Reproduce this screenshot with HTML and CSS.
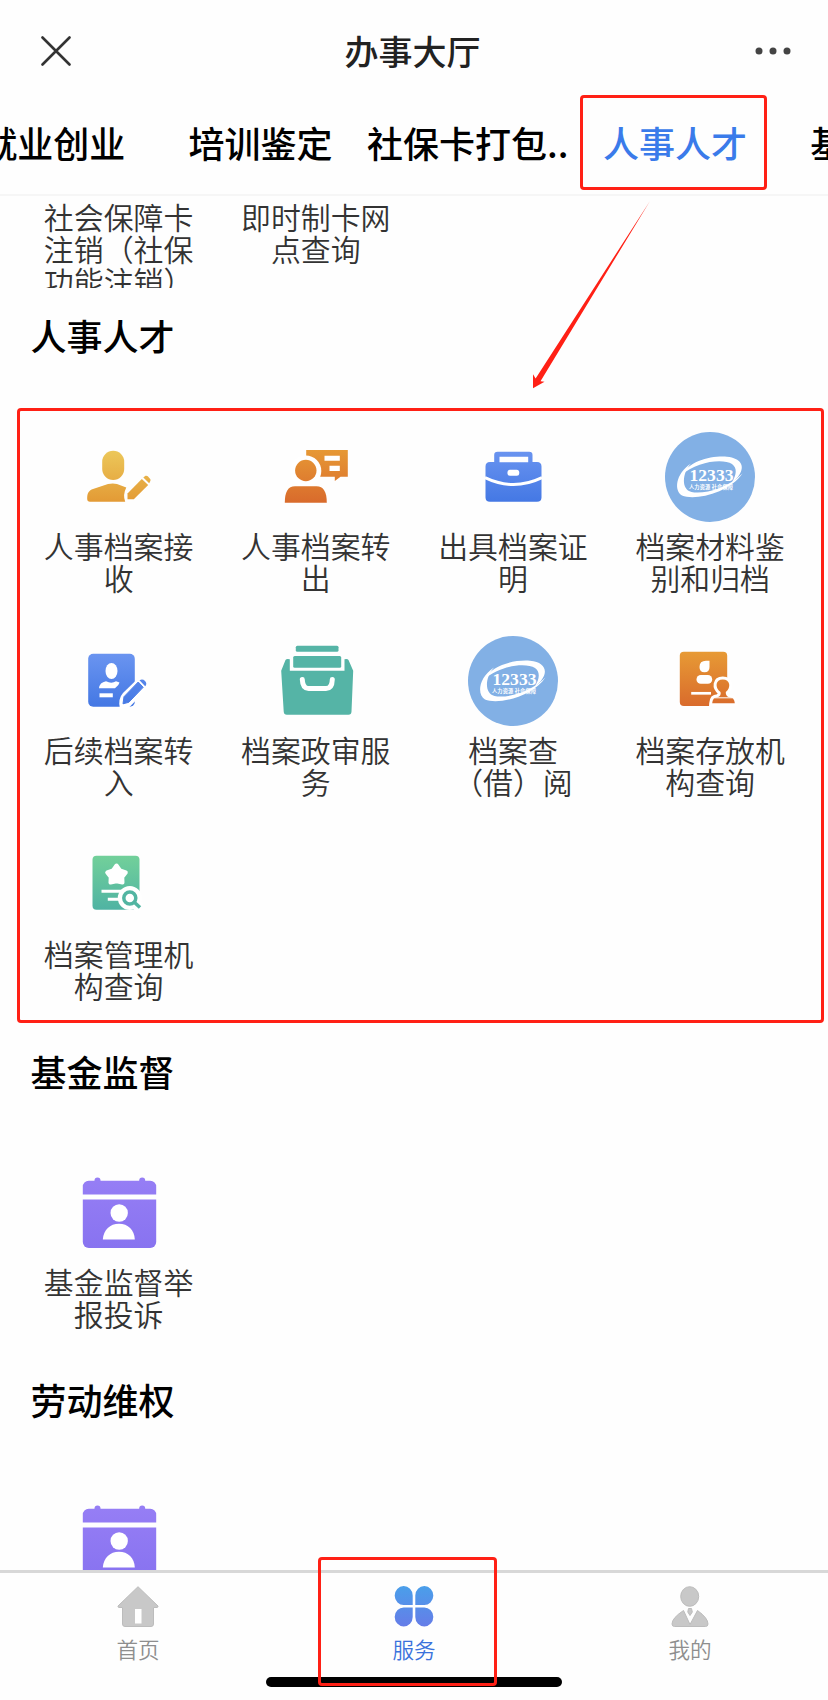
FILE: index.html
```html
<!DOCTYPE html>
<html lang="zh-CN">
<head>
    <meta charset="UTF-8">
    <meta name="viewport" content="width=device-width, initial-scale=1.0">
    <title>办事大厅</title>
    <link rel="stylesheet" href="styles.css">
</head>
<body>
    <!-- Shared gradients and icons -->
    <svg class="defs" width="0" height="0">
        <defs>
            <linearGradient id="gold" gradientUnits="userSpaceOnUse" x1="0" y1="18" x2="0" y2="70"><stop offset="0" stop-color="#ecc85a"/><stop offset="1" stop-color="#e39a35"/></linearGradient>
            <linearGradient id="orange" gradientUnits="userSpaceOnUse" x1="0" y1="16" x2="0" y2="70"><stop offset="0" stop-color="#e79a35"/><stop offset="1" stop-color="#d96b2c"/></linearGradient>
            <linearGradient id="blue" gradientUnits="userSpaceOnUse" x1="0" y1="18" x2="0" y2="70"><stop offset="0" stop-color="#6a94f0"/><stop offset="1" stop-color="#4478e4"/></linearGradient>
            <linearGradient id="green" gradientUnits="userSpaceOnUse" x1="0" y1="16" x2="0" y2="70"><stop offset="0" stop-color="#72d09a"/><stop offset="1" stop-color="#4fb3a3"/></linearGradient>
            <linearGradient id="purple" gradientUnits="userSpaceOnUse" x1="0" y1="10" x2="0" y2="80"><stop offset="0" stop-color="#967ef5"/><stop offset="1" stop-color="#8873f0"/></linearGradient>
            <linearGradient id="petal" gradientUnits="userSpaceOnUse" x1="0" y1="0" x2="0" y2="40"><stop offset="0" stop-color="#4a9fea"/><stop offset="1" stop-color="#657de8"/></linearGradient>
        </defs>
        <symbol id="logo" viewBox="0 0 90 90">
            <circle cx="45" cy="45" r="45" fill="#82b0e5"/>
            <path fill="#fff" d="M15.500 44C24 29 46 23.500 62 24.700C76 26 80 34 74.500 42.500C72.500 46 69.500 48.500 67 50C71.500 43 72.500 36 67 32C58 26.500 32 29 15.500 44Z"/>
            <path fill="#fff" d="M26 31.500C10 42 9 59 17 63.500C30 69 64 61 77.500 41.500C62 57 38 62.500 26.500 60C16 57.500 17 41 26 31.500Z"/>
        </symbol>
        <symbol id="calendar" viewBox="0 0 90 90">
            <g fill="url(#purple)">
                <circle cx="23.500" cy="12.500" r="3"/><circle cx="68.200" cy="12.500" r="3"/>
                <path d="M8.800 26.500V19a6 6 0 0 1 6-6.300H76.200a6 6 0 0 1 6 6.300V26.500Z"/>
                <path d="M8.800 31.500H82.200V74a6 6 0 0 1-6 6H14.800a6 6 0 0 1-6-6Z"/>
            </g>
            <circle cx="45.200" cy="45" r="8.700" fill="#fff"/>
            <path fill="#fff" d="M28.800 71.400C29.500 62 36 55.800 45 55.800S60.400 62 60.800 71.400Z"/>
        </symbol>
    </svg>

    <div class="page">
        <!-- Header -->
        <header class="header">
            <svg class="close" viewBox="0 0 30 30"><path d="M1.500 1.500L28.500 28.500M28.500 1.500L1.500 28.500"/></svg>
            <h1>办事大厅</h1>
            <svg class="more" viewBox="0 0 38 10"><circle cx="5" cy="5" r="3.500"/><circle cx="19" cy="5" r="3.500"/><circle cx="33" cy="5" r="3.500"/></svg>
        </header>

        <!-- Tabs -->
        <nav class="tabs">
            <a class="tab">就业创业</a>
            <a class="tab">培训鉴定</a>
            <a class="tab">社保卡打包..</a>
            <a class="tab active">人事人才</a>
            <a class="tab">基金监督</a>
        </nav>

        <!-- Service list -->
        <main class="content">
            <div class="grid cut">
                <div class="item"><p>社会保障卡注销（社保功能注销）</p></div>
                <div class="item"><p>即时制卡网点查询</p></div>
            </div>

            <h2>人事人才</h2>
            <div class="grid">
                <div class="item">
                    <svg viewBox="0 0 90 90" fill="url(#gold)">
                        <rect x="28.200" y="18.700" width="22" height="29.300" rx="11"/>
                        <path d="M13.200 67C13 61 15 58.500 19 57L34 52Q39 50.800 43 52L52.300 55.500Q48.500 63 51.200 69.700H16Q13.300 69.700 13.200 67Z"/>
                        <path d="M53.500 67.300V61.500L67.800 47L74.200 53L59.800 67.300Z"/>
                        <path d="M69.300 45.500L71.500 43.800Q72.800 43.300 73.800 44.300L76.200 47Q77 48 76.200 49.300L75.200 51.300Z"/>
                    </svg>
                    <p>人事档案接收</p>
                </div>
                <div class="item">
                    <svg viewBox="0 0 90 90" fill="url(#orange)">
                        <path d="M35.200 18H76.800V44.700H69.500L63.800 49V44.700H35.200Z"/>
                        <path fill="#fff" d="M53.500 23.700H68.800V28.700H53.500ZM58.500 33.700H68.800V39H58.500Z"/>
                        <circle cx="34.800" cy="39" r="15.500" fill="#fff"/>
                        <circle cx="34.800" cy="38.500" r="10.700"/>
                        <path d="M13.800 70.700C13.800 60 17 54.300 24 54.300H45.500C52.500 54.300 55.800 60 55.800 70.700Z"/>
                    </svg>
                    <p>人事档案转出</p>
                </div>
                <div class="item">
                    <svg viewBox="0 0 90 90" fill="url(#blue)">
                        <path fill-rule="evenodd" d="M26.200 30V23Q26.200 19.700 29.500 19.700H61.200Q64.500 19.700 64.500 23V30H69Q73.500 30 73.500 34.500V65.500Q73.500 69.700 69 69.700H22Q17.500 69.700 17.500 65.500V34.500Q17.500 30 22 30ZM31.500 24.700V30.300H60.200V24.700Z"/>
                        <rect x="39.500" y="37.700" width="11.700" height="6" rx="2.500" fill="#fff"/>
                        <path d="M17 45.700Q45.500 59.500 74 45.700" fill="none" stroke="#fff" stroke-width="3"/>
                    </svg>
                    <p>出具档案证明</p>
                </div>
                <div class="item">
                    <svg viewBox="0 0 90 90">
                        <use href="#logo"/>
                        <text class="logo-num" x="24.500" y="49.300" textLength="44">12333</text>
                        <text class="logo-text" x="24" y="56.500" textLength="44">人力资源 社会保障</text>
                    </svg>
                    <p>档案材料鉴别和归档</p>
                </div>

                <div class="item">
                    <svg viewBox="0 0 90 90" fill="url(#blue)">
                        <rect x="14.200" y="17.700" width="46.600" height="53" rx="5"/>
                        <ellipse cx="37.500" cy="35" rx="6" ry="8" fill="#fff"/>
                        <path fill="#fff" d="M25 52.300Q25.500 46.500 32 45.300Q37.500 48 42 45.300L45.500 46.500Q45 49.500 41 52.300Z"/>
                        <path d="M25.500 59.300H38.800" stroke="#fff" stroke-width="4"/>
                        <path d="M46 73Q43.500 63 49 57L66 40.500L76 50L55.500 71Z" fill="#fff"/>
                        <path d="M49 67.800L50 60.700L64.200 46L69.200 51.300L54.800 66.300Z" stroke="url(#blue)" stroke-linejoin="round"/>
                        <path d="M65.500 44.300Q68.500 42.500 71 45T71.200 50.300Z"/>
                    </svg>
                    <p>后续档案转入</p>
                </div>
                <div class="item">
                    <svg viewBox="0 0 90 90" fill="#55b4a6">
                        <rect x="24.800" y="9.700" width="42.700" height="6" rx="1.500"/>
                        <rect x="22.200" y="20" width="48" height="11.700" rx="1.500"/>
                        <path d="M10.200 34.700L14.500 24Q15.500 22.500 18.800 23.300V34.700H73.500V23.300Q76.500 22.500 77.500 24L82.200 34.700L80.500 75.500Q80.300 78.700 77.500 78.700H15.800Q13 78.700 12.700 75.500Z"/>
                        <path d="M31.300 43.500C31.500 49 33 52.500 37.500 52.500H55C59.500 52.500 61.200 49 61.300 43.500" fill="none" stroke="#fff" stroke-width="5" stroke-linecap="round"/>
                    </svg>
                    <p>档案政审服务</p>
                </div>
                <div class="item">
                    <svg viewBox="0 0 90 90">
                        <use href="#logo"/>
                        <text class="logo-num" x="24.500" y="49.300" textLength="44">12333</text>
                        <text class="logo-text" x="24" y="56.500" textLength="44">人力资源 社会保障</text>
                    </svg>
                    <p>档案查（借）阅</p>
                </div>
                <div class="item">
                    <svg viewBox="0 0 90 90" fill="url(#orange)">
                        <rect x="14.800" y="15.700" width="47.400" height="54.300" rx="4"/>
                        <path fill="#fff" d="M34.500 31Q34.500 24.700 41 24.700H44.500V31Q44.500 36.300 39.500 36.300T34.500 31Z"/>
                        <rect x="31.500" y="39" width="15.700" height="8.700" rx="4.300" fill="#fff"/>
                        <path d="M26.200 57.300H46" stroke="#fff" stroke-width="2.700"/>
                        <path d="M55.500 56C49.500 51.500 50.500 43.500 57.800 43.500S66.500 51.500 60.800 56Q60.500 60 64 61.300Q69.500 61.500 69.800 67.300H47.200Q47.500 61.500 52.500 61.300Q56.500 60 55.500 56Z" stroke="#fff" stroke-width="6" fill="#fff"/>
                        <path d="M55.500 56C49.500 51.500 50.500 43.500 57.800 43.500S66.500 51.500 60.800 56Q60.500 60 64 61.300Q69.500 61.500 69.800 67.300H47.200Q47.500 61.500 52.500 61.300Q56.500 60 55.500 56Z"/>
                        <path d="M49.500 61.800H67" stroke="#fff" stroke-width="1"/>
                    </svg>
                    <p>档案存放机构查询</p>
                </div>

                <div class="item">
                    <svg viewBox="0 0 90 90" fill="url(#green)">
                        <rect x="18.500" y="15.700" width="47" height="54" rx="4"/>
                        <path d="M42.500 25.500L46 30.500L51.800 32.500L48.300 37L48.500 42.500L42.500 41.300L36.500 42.500L36.700 37L33.200 32.500L39 30.500Z" fill="#fff" stroke="#fff" stroke-width="4" stroke-linejoin="round"/>
                        <path d="M27.500 51.300H50M33.800 59.300H48" stroke="#fff" stroke-width="3"/>
                        <path d="M55.800 58L66 68" stroke="#fff" stroke-width="11"/>
                        <circle cx="55.800" cy="58" r="12" fill="#fff"/>
                        <circle cx="55.800" cy="58" r="6" fill="none" stroke="#52b5a2" stroke-width="3.500"/>
                        <path d="M60 62L66 67.500" stroke="#52b5a2" stroke-width="3.500"/>
                    </svg>
                    <p>档案管理机构查询</p>
                </div>
            </div>

            <h2>基金监督</h2>
            <div class="grid">
                <div class="item">
                    <svg viewBox="0 0 90 90"><use href="#calendar"/></svg>
                    <p>基金监督举报投诉</p>
                </div>
            </div>

            <h2>劳动维权</h2>
            <div class="grid">
                <div class="item">
                    <svg viewBox="0 0 90 90"><use href="#calendar"/></svg>
                </div>
            </div>
        </main>

        <!-- Bottom bar -->
        <footer class="bottom">
            <div class="menu">
                <svg viewBox="0 0 42 41" fill="#c8c8c8" stroke="#bcbcbc">
                    <path d="M21 .7L41 20Q41.300 21.300 40 21.500H36.500V38Q36.500 40.500 34 40.500H8Q5.500 40.500 5.500 38V21.500H2Q.7 21.300 1 20Z"/>
                    <rect x="18" y="23" width="6.500" height="14.500" fill="#fff" stroke="none"/>
                </svg>
                <span>首页</span>
            </div>
            <div class="menu on">
                <svg viewBox="-2 0 42 41" fill="url(#petal)">
                    <path d="M17.700 19H9A9 9.500 0 1 1 17.700 9.500ZM20.300 19V9.500A9 9.500 0 1 1 29 19ZM17.700 21.500V31A9 9.500 0 1 1 9 21.500ZM20.300 21.500H29A9 9.500 0 1 1 20.300 31Z"/>
                </svg>
                <span>服务</span>
            </div>
            <div class="menu">
                <svg viewBox="-2 0 42 41" fill="#c8c8c8" stroke="#bcbcbc">
                    <ellipse cx="18.700" cy="10.500" rx="9" ry="9.800"/>
                    <path d="M12.500 24.500L19 38.500L26.500 24.500Q37 32 37 38Q37 40.500 34.500 40.500H3.500Q1 40.500 1 38Q1 32 12.500 24.500Z"/>
                    <path d="M17.500 22.500H20.500L21.300 26L19 29.500L16.800 26Z"/>
                </svg>
                <span>我的</span>
            </div>
        </footer>
        <div class="home-bar"></div>

        <!-- Red marks -->
        <div class="mark mark-tab"></div>
        <div class="mark mark-list"></div>
        <div class="mark mark-menu"></div>
        <svg class="arrow" viewBox="0 0 118 188"><path d="M117 0L7.500 180.300L11.500 180.700L0 187.300V173.300L2.600 177.500Z"/></svg>
    </div>
</body>
</html>
```
FILE: styles.css
```css
* {
    box-sizing: border-box;
}

body {
    margin: 0;
    background-color: #fefefe;
    font-family: "Noto Sans CJK SC", sans-serif;
}

h1, h2, p {
    margin: 0;
}

.defs {
    position: absolute;
}

.page {
    position: relative;
    display: flex;
    flex-direction: column;
    width: 828px;
    height: 1700px;
    overflow: hidden;
}

/* Header */
.header {
    display: flex;
    justify-content: space-between;
    align-items: center;
    height: 101px;
    padding: 0 36px 0 41px;
}

.header h1 {
    font-size: 34px;
    font-weight: 500;
    color: #222;
    line-height: 50px;
}

.close {
    width: 30px;
    height: 30px;
    fill: none;
    stroke: #333;
    stroke-width: 2.6;
    stroke-linecap: round;
}

.more {
    width: 38px;
    height: 10px;
    fill: #444;
}

/* Tabs */
.tabs {
    display: flex;
    flex-shrink: 0;
    height: 95px;
    margin-left: -50.5px;
    border-bottom: 2px solid #f6f6f6;
}

.tab {
    flex: 0 0 207.3px;
    font-size: 36px;
    font-weight: 500;
    line-height: 82px;
    text-align: center;
    color: #000;
}

.tab.active {
    color: #3a7bea;
}

/* Service list */
.content {
    flex: 1;
    min-height: 0;
    padding: 4px 20px 0;
    overflow: hidden;
}

.content h2 {
    height: 50px;
    margin: 24px 0 72px 10.5px;
    font-size: 36px;
    font-weight: 500;
    line-height: 50px;
    color: #000;
}

.grid {
    display: grid;
    grid-template-columns: repeat(4, 197.2px);
    row-gap: 43px;
}

.grid + h2 {
    margin-top: 45px;
}

.grid.cut {
    height: 88px;
    overflow: hidden;
}

.grid.cut + h2 {
    margin-top: 22px;
}

.item {
    display: flex;
    flex-direction: column;
    align-items: center;
    gap: 7px;
}

.item svg {
    width: 90px;
    height: 90px;
}

.item p {
    width: 152px;
    font-size: 29.9px;
    font-weight: 350;
    line-height: 32px;
    text-align: center;
    color: #333;
}

.logo-num {
    font-family: "Liberation Serif", serif;
    font-size: 17.6px;
    font-weight: bold;
    fill: #fff;
}

.logo-text {
    font-size: 5.2px;
    font-weight: bold;
    fill: #fff;
}

/* Bottom bar */
.bottom {
    display: flex;
    height: 130px;
    border-top: 3px solid #d8d8d8;
}

.menu {
    flex: 1;
    display: flex;
    flex-direction: column;
    align-items: center;
    padding-top: 13px;
    font-size: 21.6px;
    font-weight: 350;
    line-height: 32px;
    color: #8e8e8e;
}

.menu svg {
    width: 42px;
    height: 41px;
    margin-bottom: 6px;
}

.menu.on {
    color: #3a72dc;
}

.home-bar {
    position: absolute;
    left: 266px;
    top: 1677px;
    width: 296px;
    height: 10px;
    border-radius: 5px;
    background-color: #000;
}

/* Red marks */
.mark {
    position: absolute;
    border: 3px solid #ff2015;
    border-radius: 4px;
}

.mark-tab {
    left: 580px;
    top: 95px;
    width: 187px;
    height: 95px;
}

.mark-list {
    left: 17px;
    top: 408px;
    width: 807px;
    height: 615px;
}

.mark-menu {
    left: 318px;
    top: 1557px;
    width: 179px;
    height: 129px;
}

.arrow {
    position: absolute;
    left: 533px;
    top: 201px;
    width: 118px;
    height: 188px;
    fill: #ff2015;
}
```
